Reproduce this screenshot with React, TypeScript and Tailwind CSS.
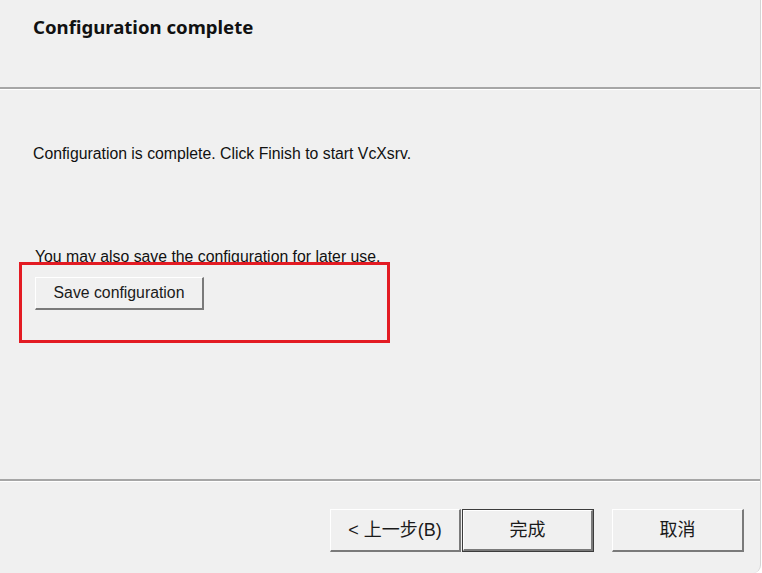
import React from 'react';

const ui = { fontFamily: '"Liberation Sans", "Noto Sans CJK SC", sans-serif' };

function ClassicButton({
  children,
  width,
  isDefault = false,
  className = '',
}: {
  children: React.ReactNode;
  width: string;
  isDefault?: boolean;
  className?: string;
}) {
  return (
    <div
      className={`${width} h-full ${isDefault ? 'border border-[#3c3c3c]' : ''} ${className}`}
    >
      <div className="h-full border-t border-l border-white border-r-2 border-b-2 border-r-[#7a7a7a] border-b-[#7a7a7a] bg-[#f0f0f0] flex items-center justify-center text-[#1a1a1a]">
        {children}
      </div>
    </div>
  );
}

export default function App() {
  return (
    <div className="w-[762px] h-[573px] bg-white overflow-hidden">
      <div
        className="w-[761px] h-[573px] bg-[#f0f0f0] border-r border-[#d4d4d4] rounded-br-[8px] flex flex-col overflow-hidden"
        style={ui}
      >
        {/* header */}
        <div className="h-[87px] shrink-0 pl-[33px] pt-[15px]">
          <div
            className="text-[18.6px] leading-[24px] font-bold text-[#111]"
            style={{ fontFamily: '"Noto Sans", "Open Sans", sans-serif' }}
          >
            Configuration complete
          </div>
        </div>
        <div className="h-[2px] bg-[#a6a6a6] shrink-0" />
        <div className="h-px bg-white shrink-0" />

        {/* body */}
        <div className="relative flex-1 pl-[33px] text-[15.8px] leading-[20px] text-[#111]">
          <div className="pt-[54px]">
            Configuration is complete. Click Finish to start VcXsrv.
          </div>
          <div className="pt-[83px] pl-[2px]">
            You may also save the configuration for later use.
          </div>
          <div className="mt-[10px] ml-[2px] h-[33px] w-[169px]">
            <ClassicButton width="w-[169px]">Save configuration</ClassicButton>
          </div>

          <div className="absolute left-[19px] top-[172px] w-[371px] h-[81px] border-[3px] border-[#e31b23]" />
        </div>

        <div className="h-[2px] bg-[#a6a6a6] shrink-0" />
        <div className="h-px bg-white shrink-0" />

        {/* footer */}
        <div className="h-[91px] shrink-0 flex justify-end pt-[27px] pr-[16px]">
          <div className="flex h-[43px] text-[18px]">
            <ClassicButton width="w-[131px]">&lt;&nbsp;上一步(B)</ClassicButton>
            <ClassicButton width="w-[132px]" isDefault className="ml-px">
              完成
            </ClassicButton>
            <ClassicButton width="w-[132px]" className="ml-[18px]">
              取消
            </ClassicButton>
          </div>
        </div>
      </div>
    </div>
  );
}
